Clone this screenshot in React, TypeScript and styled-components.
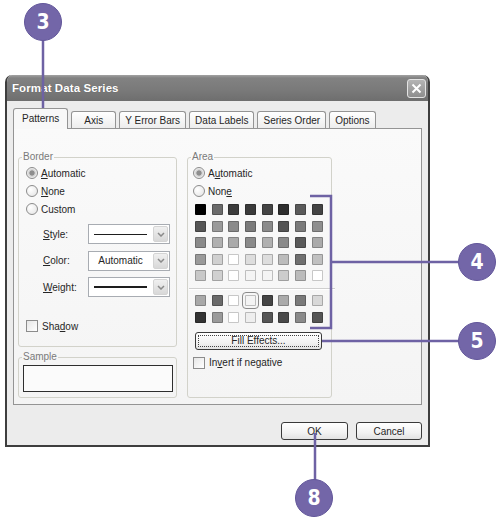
import React from 'react';
import styled, { createGlobalStyle } from 'styled-components';

const GlobalStyle = createGlobalStyle`
  html, body {
    margin: 0;
    padding: 0;
    background: #fff;
  }
  body {
    font-family: "Liberation Sans", Arial, sans-serif;
    color: #262626;
  }
  * {
    box-sizing: border-box;
  }
`;

const Page = styled.div`
  position: relative;
  width: 500px;
  height: 522px;
  padding: 75px 0 0 5px;
  overflow: hidden;
`;

const Dialog = styled.div`
  width: 425px;
  height: 372px;
  display: flex;
  flex-direction: column;
  border: 2px solid #3e3e3e;
  border-top: 0;
  border-radius: 7px 7px 0 0;
  background: #ececec;
  overflow: hidden;
`;

const TitleBar = styled.div`
  height: 26px;
  flex: none;
  display: flex;
  align-items: flex-start;
  justify-content: space-between;
  padding: 0 2px 0 5px;
  background: linear-gradient(#a2a2a2 0, #828282 3px, #797979 60%, #6e6e6e 100%);
`;

const Title = styled.span`
  margin-top: 7px;
  font-size: 11.5px;
  font-weight: bold;
  color: #fff;
  letter-spacing: 0.1px;
  text-shadow: 0 0 1px rgba(0, 0, 0, 0.3);
`;

const CloseButton = styled.div`
  width: 19px;
  height: 19px;
  margin-top: 4px;
  display: flex;
  align-items: center;
  justify-content: center;
  border: 1px solid #e4e4e4;
  border-radius: 3px;
  background: linear-gradient(#b4b4b4, #8e8e8e);
`;

const Body = styled.div`
  flex: 1;
  display: flex;
  flex-direction: column;
  padding: 7px 6px 5px 6px;
`;

const TabRow = styled.div`
  height: 21px;
  flex: none;
  display: flex;
  align-items: flex-end;
  gap: 3px;
  margin-bottom: -1px;
  position: relative;
  z-index: 1;
`;

const Tab = styled.div<{ $active?: boolean }>`
  height: ${(p) => (p.$active ? 21 : 17)}px;
  margin-bottom: ${(p) => (p.$active ? 0 : 1)}px;
  min-width: 45px;
  padding: 0 ${(p) => (p.$active ? 8 : 5)}px ${(p) => (p.$active ? 2 : 0)}px;
  display: flex;
  align-items: center;
  justify-content: center;
  border: 1px solid #949494;
  border-bottom: 0;
  border-radius: 3px 3px 0 0;
  background: ${(p) => (p.$active ? '#f8f8f8' : 'linear-gradient(#ffffff, #ededed)')};
  font-size: 10px;
  white-space: nowrap;
`;

const Panel = styled.div`
  flex: 1;
  display: grid;
  grid-template-columns: 159px 145px;
  column-gap: 10px;
  align-content: start;
  padding: 22px 0 0 4px;
  border: 1px solid #949494;
  background: linear-gradient(#fafafa, #f4f4f4);
`;

const Column = styled.div`
  display: flex;
  flex-direction: column;
  gap: 4px;
`;

const Group = styled.fieldset`
  margin: 0;
  padding: 0;
  min-width: 0;
  border: 1px solid #d2d2ca;
  border-radius: 3px;
`;

const Legend = styled.legend`
  margin-left: 3px;
  padding: 0 1px;
  font-size: 10px;
  line-height: 12px;
  color: #7a7a7a;
`;

const GroupBody = styled.div<{ $pad: string }>`
  display: flex;
  flex-direction: column;
  padding: ${(p) => p.$pad};
`;

const OptionRow = styled.div`
  height: 18px;
  display: flex;
  align-items: center;
  gap: 3px;
  font-size: 10px;
`;

const Radio = styled.span<{ $checked?: boolean }>`
  width: 12px;
  height: 12px;
  flex: none;
  border-radius: 50%;
  border: 1px solid #8c8c8c;
  background: ${(p) =>
    p.$checked
      ? 'radial-gradient(circle, #8e8e8e 0 2.3px, #c9c9c9 2.8px, #f4f4f4 5px)'
      : 'radial-gradient(circle at 35% 35%, #ffffff 0, #e2e2e2 100%)'};
`;

const CheckBox = styled.span`
  width: 12px;
  height: 12px;
  flex: none;
  border: 1px solid #8c8c8c;
  background: linear-gradient(135deg, #e6e6e6, #ffffff);
`;

const Key = styled.u`
  text-decoration: underline;
  text-underline-offset: 1px;
`;

const FieldList = styled.div`
  display: flex;
  flex-direction: column;
  gap: 6.5px;
  margin-top: 6px;
  padding-left: 17px;
`;

const FieldRow = styled.div`
  height: 20px;
  display: flex;
  align-items: center;
  font-size: 10px;
`;

const FieldLabel = styled.span`
  width: 45px;
`;

const Select = styled.div`
  width: 82px;
  height: 20px;
  display: flex;
  align-items: stretch;
  padding: 1px;
  border: 1px solid #a8acb2;
  background: #fff;
`;

const SelectValue = styled.div`
  flex: 1;
  display: flex;
  align-items: center;
  justify-content: center;
  font-size: 10px;
  padding-right: 2px;
`;

const LineSample = styled.div<{ $weight: number }>`
  width: 53px;
  height: ${(p) => p.$weight}px;
  background: #1e1e1e;
`;

const SelectArrow = styled.div`
  width: 15px;
  display: flex;
  align-items: center;
  justify-content: center;
  border: 1px solid #d4d4d4;
  border-radius: 2px;
  background: linear-gradient(#f0f0f0, #d8d8d8);
`;

const CheckRow = styled.div<{ $top: number }>`
  display: flex;
  align-items: center;
  gap: 4px;
  height: 12px;
  margin-top: ${(p) => p.$top}px;
  font-size: 10px;
`;

const SampleBox = styled.div`
  width: 150px;
  height: 27px;
  border: 1px solid #2e2e2e;
  background: #fbfbfb;
`;

const Swatches = styled.div`
  display: grid;
  grid-template-columns: repeat(8, 11px);
  column-gap: 5.7px;
  row-gap: 5.5px;
  padding-left: 2px;
`;

const Swatch = styled.span<{ $color: string; $selected?: boolean }>`
  width: 11px;
  height: 11px;
  border-radius: 1px;
  border: 1px solid rgba(0, 0, 0, 0.22);
  background: ${(p) => p.$color};
  outline: ${(p) => (p.$selected ? '1px solid #8a8a8a' : 'none')};
  outline-offset: 2px;
`;

const Separator = styled.div`
  height: 2px;
  margin: 6.5px -4px 5.5px -4px;
  border-top: 1px solid #cfcfcf;
  border-bottom: 1px solid #ffffff;
`;

const PushButton = styled.div<{ $width: number }>`
  width: ${(p) => p.$width}px;
  height: 18px;
  display: flex;
  padding: 2px;
  border: 1px solid #3a3a3a;
  border-radius: 3px;
  background: linear-gradient(#ffffff, #f2f2f2 60%, #e2e2e2);
  font-size: 10px;
`;

const ButtonFace = styled.span<{ $focused?: boolean }>`
  flex: 1;
  display: flex;
  align-items: center;
  justify-content: center;
  border: 1px dotted ${(p) => (p.$focused ? '#444' : 'transparent')};
`;

const FillButtonSlot = styled.div`
  margin: 9px 0 0 2px;
`;

const ButtonRow = styled.div`
  height: 18px;
  flex: none;
  margin-top: 17px;
  display: flex;
  justify-content: flex-end;
  gap: 8px;
`;

const Overlay = styled.svg`
  position: absolute;
  left: 0;
  top: 0;
  pointer-events: none;
`;

const Callout = styled.div<{ $x: number; $y: number }>`
  position: absolute;
  left: ${(p) => p.$x - 19}px;
  top: ${(p) => p.$y - 19}px;
  width: 38px;
  height: 38px;
  border-radius: 50%;
  border: 1px solid #62569a;
  background: #7366a8;
  display: flex;
  align-items: center;
  justify-content: center;
  color: #fff;
  font-family: "DejaVu Sans Condensed", "DejaVu Sans", sans-serif;
  font-weight: bold;
  font-size: 21px;
`;

const palette: string[][] = [
  ['#000000', '#6a6a6a', '#3c3c3c', '#3a3a3a', '#444444', '#2e2e2e', '#5a5a5a', '#444444'],
  ['#555555', '#9a9a9a', '#8a8a8a', '#7a7a7a', '#8a8a8a', '#555555', '#7a7a7a', '#8f8f8f'],
  ['#8a8a8a', '#b0b0b0', '#aaaaaa', '#8a8a8a', '#b0b0b0', '#8a8a8a', '#5a5a5a', '#aaaaaa'],
  ['#9a9a9a', '#d0d0d0', '#ffffff', '#dddddd', '#dddddd', '#bcbcbc', '#707070', '#c0c0c0'],
  ['#c8c8c8', '#d0d0d0', '#ffffff', '#f4f4f4', '#f4f4f4', '#cccccc', '#bbbbbb', '#ffffff'],
];

const extraPalette: string[][] = [
  ['#a8a8a8', '#6a6a6a', '#ffffff', '#f4f4f4', '#444444', '#aaaaaa', '#7a7a7a', '#d8d8d8'],
  ['#333333', '#9a9a9a', '#ffffff', '#eeeeee', '#555555', '#4a4a4a', '#8a8a8a', '#555555'],
];

const tabs = ['Patterns', 'Axis', 'Y Error Bars', 'Data Labels', 'Series Order', 'Options'];

const Chevron = () => (
  <svg width="8" height="5" viewBox="0 0 8 5">
    <polyline points="1,1 4,4 7,1" fill="none" stroke="#8a8a8a" strokeWidth="1.5" />
  </svg>
);

const DropDown: React.FC<{ children: React.ReactNode }> = ({ children }) => (
  <Select>
    <SelectValue>{children}</SelectValue>
    <SelectArrow>
      <Chevron />
    </SelectArrow>
  </Select>
);

const PURPLE = '#6e62a4';

export default function App() {
  return (
    <Page>
      <GlobalStyle />
      <Dialog>
        <TitleBar>
          <Title>Format Data Series</Title>
          <CloseButton>
            <svg width="11" height="11" viewBox="0 0 11 11">
              <path d="M1.5 1.5 L9.5 9.5 M9.5 1.5 L1.5 9.5" stroke="#fff" strokeWidth="2" />
            </svg>
          </CloseButton>
        </TitleBar>
        <Body>
          <TabRow>
            {tabs.map((t, i) => (
              <Tab key={t} $active={i === 0}>
                {t}
              </Tab>
            ))}
          </TabRow>
          <Panel>
            <Column>
              <Group>
                <Legend>Border</Legend>
                <GroupBody $pad="1px 0 14px 7px">
                  <OptionRow>
                    <Radio $checked />
                    <span>
                      <Key>A</Key>utomatic
                    </span>
                  </OptionRow>
                  <OptionRow>
                    <Radio />
                    <span>
                      <Key>N</Key>one
                    </span>
                  </OptionRow>
                  <OptionRow>
                    <Radio />
                    <span>Custom</span>
                  </OptionRow>
                  <FieldList>
                    <FieldRow>
                      <FieldLabel>
                        <Key>S</Key>tyle:
                      </FieldLabel>
                      <DropDown>
                        <LineSample $weight={1} />
                      </DropDown>
                    </FieldRow>
                    <FieldRow>
                      <FieldLabel>
                        <Key>C</Key>olor:
                      </FieldLabel>
                      <DropDown>Automatic</DropDown>
                    </FieldRow>
                    <FieldRow>
                      <FieldLabel>
                        <Key>W</Key>eight:
                      </FieldLabel>
                      <DropDown>
                        <LineSample $weight={2} />
                      </DropDown>
                    </FieldRow>
                  </FieldList>
                  <CheckRow $top={23}>
                    <CheckBox />
                    <span>
                      Sha<Key>d</Key>ow
                    </span>
                  </CheckRow>
                </GroupBody>
              </Group>
              <Group>
                <Legend>Sample</Legend>
                <GroupBody $pad="2px 0 5px 4px">
                  <SampleBox />
                </GroupBody>
              </Group>
            </Column>
            <Group>
              <Legend>Area</Legend>
              <GroupBody $pad="1px 0 0 5px">
                <OptionRow>
                  <Radio $checked />
                  <span>
                    A<Key>u</Key>tomatic
                  </span>
                </OptionRow>
                <OptionRow>
                  <Radio />
                  <span>
                    Non<Key>e</Key>
                  </span>
                </OptionRow>
                <div style={{ height: 4 }} />
                <Swatches>
                  {palette.flat().map((c, i) => (
                    <Swatch key={i} $color={c} />
                  ))}
                </Swatches>
                <Separator />
                <Swatches>
                  {extraPalette.flat().map((c, i) => (
                    <Swatch key={i} $color={c} $selected={i === 3} />
                  ))}
                </Swatches>
                <FillButtonSlot>
                  <PushButton $width={127}>
                    <ButtonFace $focused>Fill Effects...</ButtonFace>
                  </PushButton>
                </FillButtonSlot>
                <CheckRow $top={7}>
                  <CheckBox />
                  <span>
                    In<Key>v</Key>ert if negative
                  </span>
                </CheckRow>
              </GroupBody>
            </Group>
          </Panel>
          <ButtonRow>
            <PushButton $width={67}>
              <ButtonFace>OK</ButtonFace>
            </PushButton>
            <PushButton $width={66}>
              <ButtonFace>Cancel</ButtonFace>
            </PushButton>
          </ButtonRow>
        </Body>
      </Dialog>

      <Overlay width="500" height="522" viewBox="0 0 500 522">
        <g stroke={PURPLE} strokeWidth="2.5" fill="none">
          <line x1="43" y1="38" x2="43" y2="117" />
          <polyline points="310,196 331,196 331,328 310,328" />
          <line x1="331" y1="262" x2="460" y2="262" />
          <line x1="322" y1="341" x2="460" y2="341" />
          <line x1="315" y1="433" x2="315" y2="481" />
        </g>
      </Overlay>
      <Callout $x={43} $y={22}>3</Callout>
      <Callout $x={477} $y={262}>4</Callout>
      <Callout $x={477} $y={341}>5</Callout>
      <Callout $x={314} $y={498}>8</Callout>
    </Page>
  );
}
